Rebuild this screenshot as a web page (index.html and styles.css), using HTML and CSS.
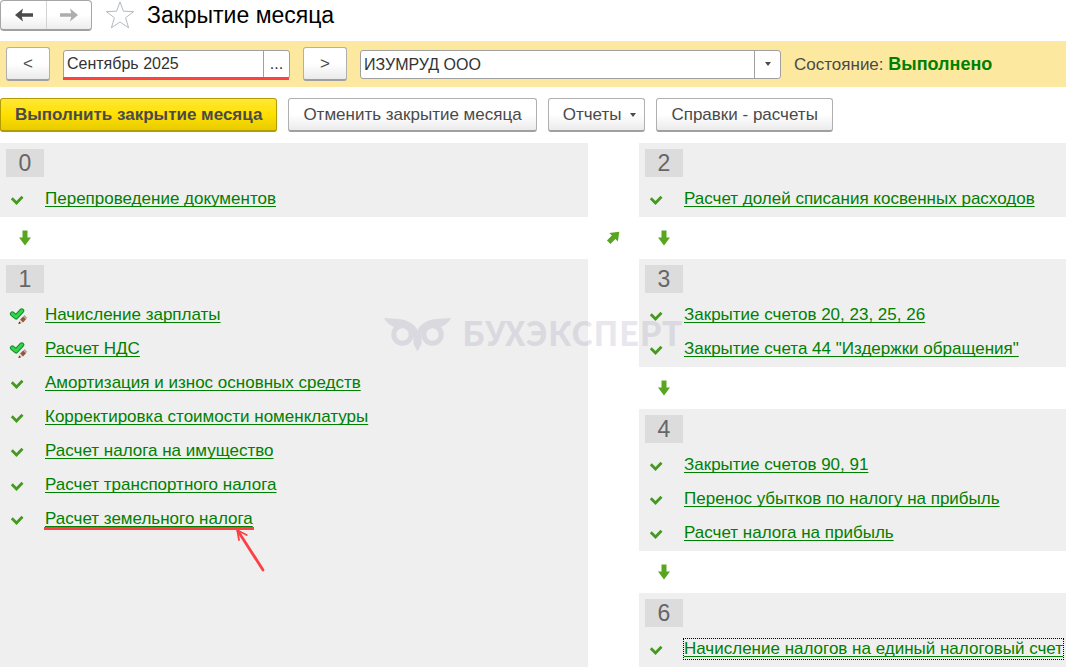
FILE: index.html
```
<!DOCTYPE html>
<html lang="ru">
<head>
  <meta charset="UTF-8" />
  <meta name="viewport" content="width=device-width, initial-scale=1.0"/>
  <title>Закрытие месяца</title>
  <link rel="stylesheet" href="styles.css">
</head>
<body>
  <!-- Общие иконки -->
  <svg class="sprite" aria-hidden="true">
    <symbol id="check" viewBox="0 0 18 18">
      <path d="M2.8 8.3 L7.5 13 L13.5 6.8" fill="none" stroke="#46991f" stroke-width="2.8"/>
    </symbol>
    <symbol id="check-edit" viewBox="0 0 18 18">
      <path d="M3.4 7.8 L7 11 L12.8 4.8" fill="none" stroke="#168a2c" stroke-width="5" stroke-linejoin="round" stroke-linecap="round"/>
      <path d="M3.4 7.8 L7 11 L12.8 4.8" fill="none" stroke="#2fd648" stroke-width="3" stroke-linejoin="round" stroke-linecap="round"/>
      <path d="M9.6 17.8 L11 13.4 L15.6 9 L18 11.8 L14 16.6 Z" fill="#efd3bd"/>
      <path d="M11.2 13.6 L14.2 10.6 L17 13.2 L14 16.4 Z" fill="#8a5a44"/>
      <path d="M14.2 10.6 L15.6 9 L18 11.8 L17 13.2 Z" fill="#b9a196"/>
      <path d="M9.4 18 L10.2 15.6 L12 17.2 Z" fill="#3c2a24"/>
    </symbol>
    <symbol id="arrow" viewBox="0 0 14 16">
      <path d="M4.5 0.5 H9.5 V7.5 H13 L7 15.5 L1 7.5 H4.5 Z" fill="#58a51f"/>
    </symbol>
  </svg>

  <header class="header">
    <div class="nav">
      <button type="button" class="nav-btn" aria-label="Назад">
        <svg width="18" height="14" viewBox="0 0 18 14"><path d="M0 7 L8 0.5 L6.8 5.2 H18 V8.8 H6.8 L8 13.5 Z" fill="#4b4b4b"/></svg>
      </button>
      <button type="button" class="nav-btn" aria-label="Вперед">
        <svg width="18" height="14" viewBox="0 0 18 14"><path d="M18 7 L10 0.5 L11.2 5.2 H0 V8.8 H11.2 L10 13.5 Z" fill="#adadad"/></svg>
      </button>
    </div>
    <svg class="star" width="30" height="30" viewBox="0 0 30 30"><path d="M15 2 L18.4 11.2 L28.6 11.6 L20.6 17.8 L23.6 27.8 L15 22 L6.4 27.8 L9.4 17.8 L1.4 11.6 L11.6 11.2 Z" fill="#fff" stroke="#b4bac2"/></svg>
    <h1>Закрытие месяца</h1>
  </header>

  <div class="period-bar">
    <button type="button" class="btn step" aria-label="Предыдущий месяц">&lt;</button>
    <div class="field period">
      <input type="text" value="Сентябрь 2025" aria-label="Период">
      <button type="button" aria-label="Выбрать период">...</button>
    </div>
    <button type="button" class="btn step" aria-label="Следующий месяц">&gt;</button>
    <div class="field company">
      <select aria-label="Организация">
        <option>ИЗУМРУД ООО</option>
      </select>
      <span class="drop"><i class="caret"></i></span>
    </div>
    <p class="state">Состояние: <b>Выполнено</b></p>
  </div>

  <div class="toolbar">
    <button type="button" class="btn primary">Выполнить закрытие месяца</button>
    <button type="button" class="btn">Отменить закрытие месяца</button>
    <button type="button" class="btn menu">Отчеты <i class="caret"></i></button>
    <button type="button" class="btn">Справки - расчеты</button>
  </div>

  <main class="stages">
    <div class="column">
      <section class="stage">
        <div class="num">0</div>
        <ul>
          <li><svg><use href="#check"/></svg><a href="#">Перепроведение документов</a></li>
        </ul>
      </section>
      <div class="next"><svg><use href="#arrow"/></svg></div>
      <section class="stage grow">
        <div class="num">1</div>
        <ul>
          <li><svg><use href="#check-edit"/></svg><a href="#">Начисление зарплаты</a></li>
          <li><svg><use href="#check-edit"/></svg><a href="#">Расчет НДС</a></li>
          <li><svg><use href="#check"/></svg><a href="#">Амортизация и износ основных средств</a></li>
          <li><svg><use href="#check"/></svg><a href="#">Корректировка стоимости номенклатуры</a></li>
          <li><svg><use href="#check"/></svg><a href="#">Расчет налога на имущество</a></li>
          <li><svg><use href="#check"/></svg><a href="#">Расчет транспортного налога</a></li>
          <li>
            <svg><use href="#check"/></svg>
            <a href="#" class="marked">Расчет земельного налога
              <svg class="pointer" viewBox="0 0 30 44"><path d="M28 41 L3 2" stroke-width="2.8"/><path d="M4 11 L2.3 1.3 L11.7 6" stroke-width="1.8"/></svg>
            </a>
          </li>
        </ul>
      </section>
    </div>

    <div class="between">
      <svg><use href="#arrow"/></svg>
    </div>

    <div class="column">
      <section class="stage">
        <div class="num">2</div>
        <ul>
          <li><svg><use href="#check"/></svg><a href="#">Расчет долей списания косвенных расходов</a></li>
        </ul>
      </section>
      <div class="next"><svg><use href="#arrow"/></svg></div>
      <section class="stage">
        <div class="num">3</div>
        <ul>
          <li><svg><use href="#check"/></svg><a href="#">Закрытие счетов 20, 23, 25, 26</a></li>
          <li><svg><use href="#check"/></svg><a href="#">Закрытие счета 44 "Издержки обращения"</a></li>
        </ul>
      </section>
      <div class="next"><svg><use href="#arrow"/></svg></div>
      <section class="stage">
        <div class="num">4</div>
        <ul>
          <li><svg><use href="#check"/></svg><a href="#">Закрытие счетов 90, 91</a></li>
          <li><svg><use href="#check"/></svg><a href="#">Перенос убытков по налогу на прибыль</a></li>
          <li><svg><use href="#check"/></svg><a href="#">Расчет налога на прибыль</a></li>
        </ul>
      </section>
      <div class="next"><svg><use href="#arrow"/></svg></div>
      <section class="stage">
        <div class="num">6</div>
        <ul>
          <li><svg><use href="#check"/></svg><a href="#" class="current">Начисление налогов на единый налоговый счет</a></li>
        </ul>
      </section>
    </div>

    <div class="watermark">
      <svg width="68" height="34" viewBox="0 0 68 34">
        <path d="M0 0 C10 1 20 0 27 5 C31 8 33 10 33.5 13 C34 10 36 8 40 5 C47 0 57 1 67 0 C65 4 62 7 57 9 L48.5 8 L40 12 L37.5 17 V26 L33.5 33.5 L29.5 26 V17 L27 12 L18.5 8 L10 9 C5 7 2 4 0 0 Z"/>
        <circle cx="18.5" cy="16.5" r="8.7" class="eye"/>
        <circle cx="48.5" cy="16.5" r="8.7" class="eye"/>
      </svg>
      <span>БУХЭКСПЕРТ</span>
    </div>
  </main>
</body>
</html>
```
FILE: styles.css
```
* {
  box-sizing: border-box;
}

body {
  margin: 0;
  font-family: "Liberation Sans", Arial, sans-serif;
  font-size: 17px;
  color: #4a4a4a;
  background-color: #fff;
}

button, input, select {
  font: inherit;
  color: inherit;
}

.sprite {
  display: none;
}

/* Заголовок */
.header {
  display: flex;
  align-items: flex-start;
  height: 41px;
}

.nav {
  display: flex;
  height: 31px;
  border: 1px solid #a6a6a6;
  border-bottom: 2px solid #a0a0a0;
  border-radius: 4px;
  background: linear-gradient(#fff 50%, #ededed);
}

.nav-btn {
  display: flex;
  align-items: center;
  justify-content: center;
  width: 45px;
  padding: 0;
  border: none;
  background: none;
}

.nav-btn + .nav-btn {
  border-left: 1px solid #d4d4d4;
}

.star {
  margin-left: 13px;
}

h1 {
  margin: 0 0 0 12px;
  font-size: 23px;
  line-height: 30px;
  font-weight: normal;
  color: #000;
}

/* Период и организация */
.period-bar {
  display: flex;
  align-items: center;
  gap: 13px;
  height: 46px;
  padding: 0 6px;
  background-color: #fce99f;
}

.btn {
  height: 34px;
  padding: 0 14px;
  border: 1px solid #b0b0b0;
  border-bottom: 2px solid #a0a0a0;
  border-radius: 3px;
  background: linear-gradient(#fff 50%, #ebebeb);
  white-space: nowrap;
}

.step {
  width: 44px;
  padding: 0;
}

.field {
  position: relative;
  display: flex;
  height: 29px;
  border: 1px solid #a0a0a0;
  border-radius: 3px;
  background-color: #fff;
  color: #333;
  font-size: 16px;
}

.field input, .field select {
  flex: 1;
  min-width: 0;
  padding: 0 3px;
  border: none;
  background: none;
  appearance: none;
  outline: none;
}

.period {
  width: 227px;
}

.period button {
  width: 26px;
  padding: 0;
  border: none;
  border-left: 1px solid #a0a0a0;
  background: none;
}

.period::after {
  content: "";
  position: absolute;
  left: -1px;
  right: 0;
  bottom: -2px;
  height: 3px;
  background-color: #fc4044;
}

.company {
  flex: 0 1 421px;
}

.drop {
  display: flex;
  align-items: center;
  justify-content: center;
  width: 26px;
  border-left: 1px solid #a0a0a0;
  pointer-events: none;
}

.caret {
  border: 3px solid transparent;
  border-top: 4px solid #4a4a4a;
  border-bottom: none;
}

.state {
  margin: 0;
  white-space: nowrap;
}

.state b {
  font-size: 18px;
  color: #008000;
}

/* Команды */
.toolbar {
  display: flex;
  gap: 11px;
  padding: 11px 0;
}

.primary {
  border-color: #b39b00;
  background: linear-gradient(#ffe838, #ffe000 50%, #e8cc00);
  font-weight: bold;
}

.menu {
  display: flex;
  align-items: center;
  gap: 9px;
  padding-right: 8px;
}

/* Этапы закрытия */
.stages {
  position: relative;
  display: grid;
  grid-template-columns: 588fr 51px 427fr;
  margin-bottom: 3px;
}

.column {
  display: flex;
  flex-direction: column;
  min-width: 0;
}

.stage {
  padding: 6px 6px 2px;
  background-color: #efefef;
}

.grow {
  flex: 1;
}

.num {
  width: 38px;
  height: 28px;
  margin-bottom: 4px;
  background-color: #dcdcdc;
  color: #666;
  font-size: 23px;
  line-height: 28px;
  text-align: center;
}

.stage ul {
  margin: 0;
  padding: 0;
  list-style: none;
}

.stage li {
  display: flex;
  align-items: center;
  gap: 18px;
  height: 34px;
  padding: 2px 0 0 3px;
}

.stage li > svg {
  flex: none;
  width: 18px;
  height: 18px;
}

.stage a {
  position: relative;
  line-height: 20px;
  color: #008000;
  text-decoration: underline 1px;
  text-underline-offset: 2px;
  text-decoration-skip-ink: none;
  white-space: nowrap;
}

.stage .current {
  outline: 1px dotted #000;
}

.marked::after {
  content: "";
  position: absolute;
  left: -1px;
  right: -1px;
  bottom: -1px;
  height: 3px;
  background-color: #fc4044;
}

.pointer {
  position: absolute;
  top: 100%;
  right: -12px;
  width: 30px;
  height: 44px;
  fill: none;
  stroke: #fc4044;
  stroke-linecap: round;
}

.next {
  display: flex;
  align-items: center;
  height: 42px;
  padding-left: 18px;
}

.next svg, .between svg {
  width: 14px;
  height: 16px;
}

.between {
  padding: 86px 0 0 19px;
}

.between svg {
  transform: rotate(-135deg);
}

.watermark {
  position: absolute;
  top: 166px;
  left: 384px;
  display: flex;
  align-items: center;
  gap: 10px;
  color: #28205a;
  font: bold 34px/46px "Noto Sans CJK SC", sans-serif;
  opacity: 0.1;
  pointer-events: none;
}

.watermark svg {
  margin-top: 6px;
  fill: currentColor;
}

.watermark .eye {
  fill: none;
  stroke: currentColor;
  stroke-width: 5px;
}
```
